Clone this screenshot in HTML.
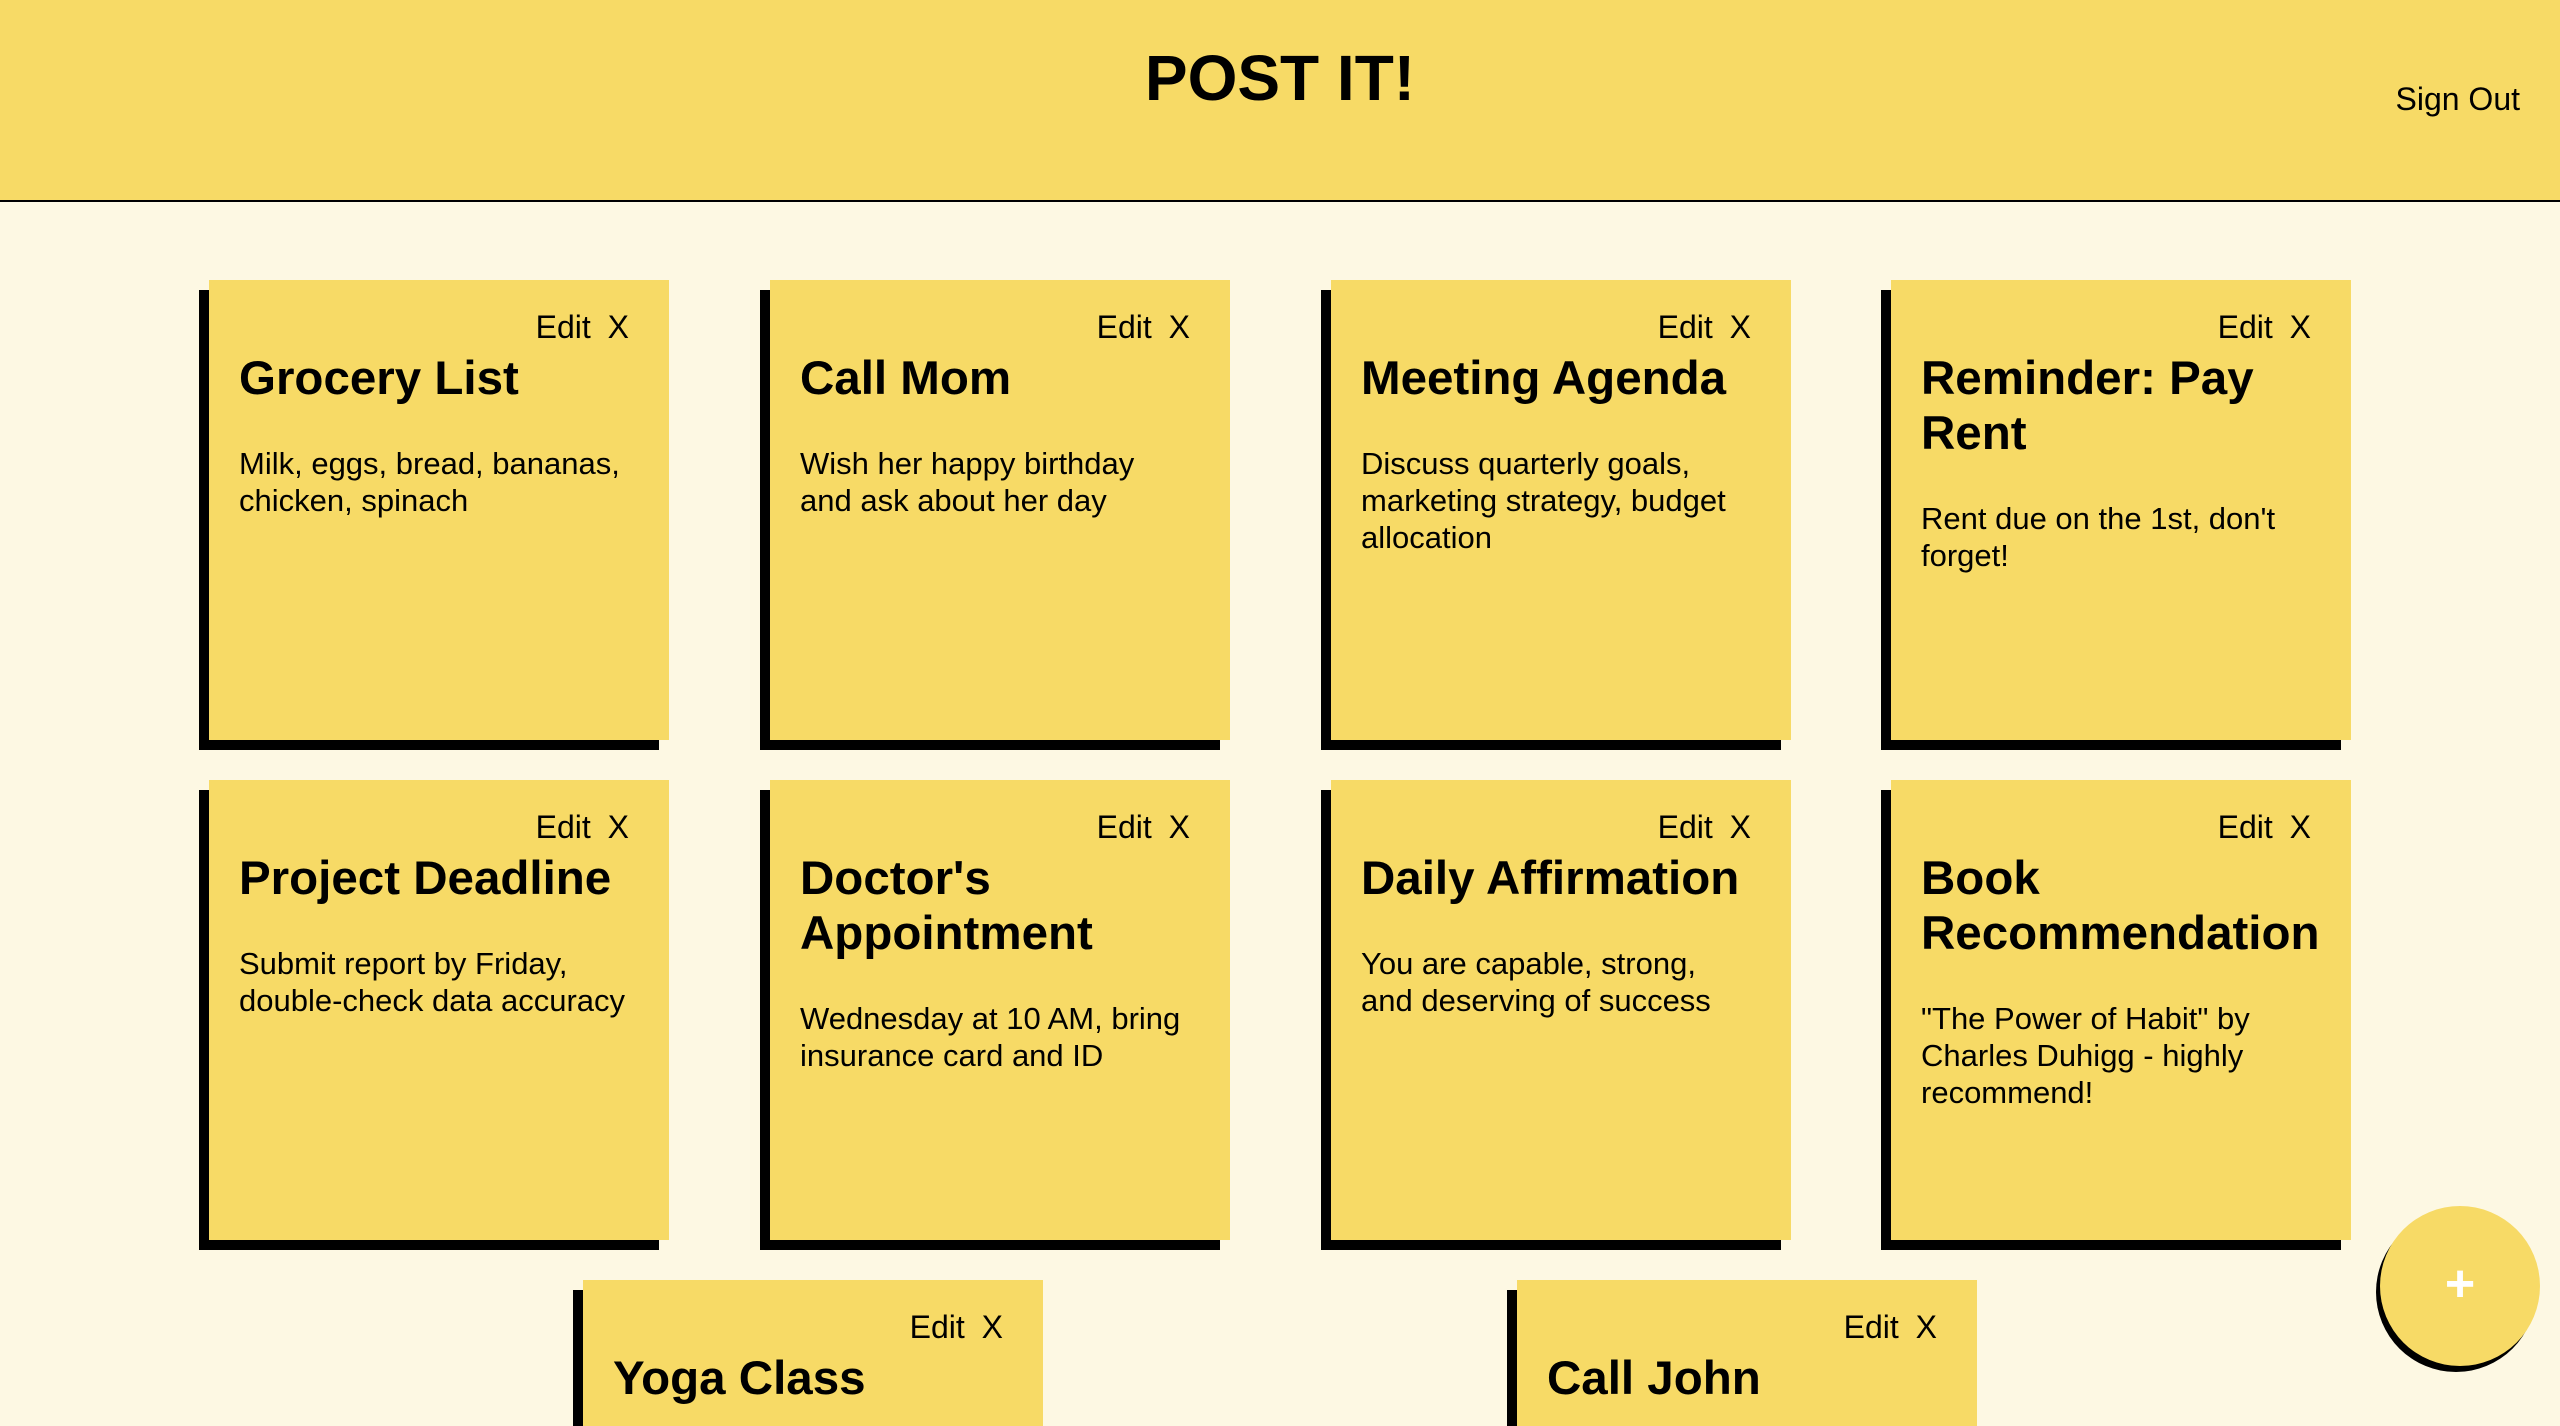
<!DOCTYPE html>
<html><head><meta charset="utf-8"><style>
*{box-sizing:border-box;margin:0;padding:0}
html,body{width:2560px;height:1426px;overflow:hidden}
body{background:#fdf8e3;font-family:"Liberation Sans",Arial,sans-serif;color:#000;position:relative}
.hdr{position:absolute;left:0;top:0;width:2560px;height:202px;background:#f7da66;border-bottom:2px solid #000}
.title{position:absolute;left:0;width:2560px;top:38px;text-align:center;font-size:64px;font-weight:bold;line-height:80px}
.so{position:absolute;right:40px;top:81px;font-size:32px;line-height:37px}
.card{position:absolute;width:460px;height:460px;background:#f7da66;box-shadow:-10px 10px 0 #000;padding:29px 40px 0 30px}
.ed{text-align:right;font-size:32px;line-height:37px;word-spacing:8px}
h2{font-size:47.5px;line-height:55px;margin-top:5px;font-weight:bold;margin-right:-8px}
p{font-size:31px;line-height:37px;margin-top:39px;margin-right:-1px}
.fab{position:absolute;left:2380px;top:1206px;width:160px;height:160px;border-radius:50%;background:#f7da66;box-shadow:-4px 6px 0 #000;color:#fff;font-size:52px;font-weight:bold;text-align:center;line-height:156px}
</style></head><body>
<div class="hdr"><div class="title">POST IT!</div><div class="so">Sign Out</div></div>

<div class="card" style="left:209px;top:280px"><div class="ed">Edit X</div><h2>Grocery List</h2><p>Milk, eggs, bread, bananas, chicken, spinach</p></div>
<div class="card" style="left:770px;top:280px"><div class="ed">Edit X</div><h2>Call Mom</h2><p>Wish her happy birthday<br>and ask about her day</p></div>
<div class="card" style="left:1331px;top:280px"><div class="ed">Edit X</div><h2>Meeting Agenda</h2><p>Discuss quarterly goals, marketing strategy, budget allocation</p></div>
<div class="card" style="left:1891px;top:280px"><div class="ed">Edit X</div><h2>Reminder: Pay Rent</h2><p>Rent due on the 1st, don't forget!</p></div>

<div class="card" style="left:209px;top:780px"><div class="ed">Edit X</div><h2>Project Deadline</h2><p>Submit report by Friday,<br>double-check data accuracy</p></div>
<div class="card" style="left:770px;top:780px"><div class="ed">Edit X</div><h2>Doctor's Appointment</h2><p>Wednesday at 10 AM, bring insurance card and ID</p></div>
<div class="card" style="left:1331px;top:780px"><div class="ed">Edit X</div><h2>Daily Affirmation</h2><p>You are capable, strong,<br>and deserving of success</p></div>
<div class="card" style="left:1891px;top:780px"><div class="ed">Edit X</div><h2>Book Recommendation</h2><p>"The Power of Habit" by Charles Duhigg - highly recommend!</p></div>

<div class="card" style="left:583px;top:1280px;height:146px"><div class="ed">Edit X</div><h2>Yoga Class</h2></div>
<div class="card" style="left:1517px;top:1280px;height:146px"><div class="ed">Edit X</div><h2>Call John</h2></div>

<div class="fab">+</div>
</body></html>
